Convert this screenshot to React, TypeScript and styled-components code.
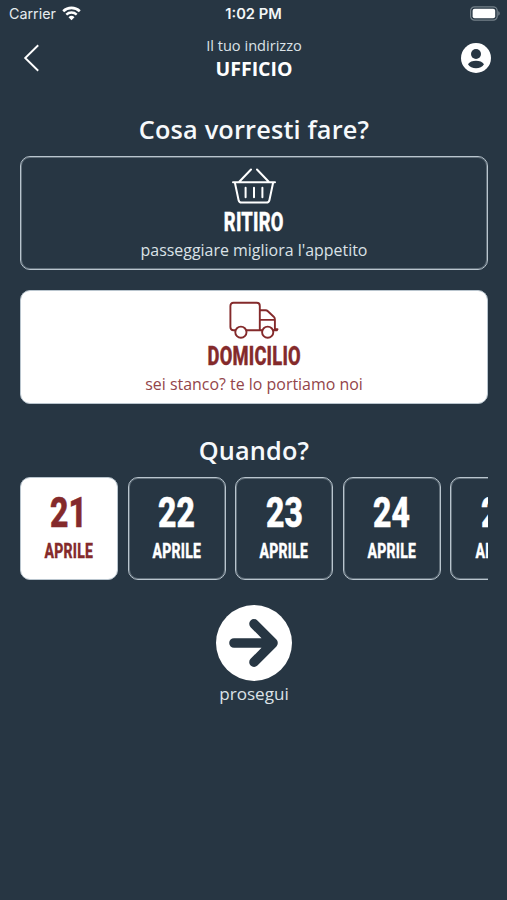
import React from 'react';
import styled, { createGlobalStyle } from 'styled-components';

const NAVY = '#273643';
const RED = '#842a2b';
const LINE = '#b9c5ce';

const GlobalStyle = createGlobalStyle`
  * { box-sizing: border-box; }
  body { margin: 0; background: ${NAVY}; }
`;

const Screen = styled.div`
  width: 507px;
  height: 900px;
  overflow: hidden;
  background: ${NAVY};
  color: #fff;
  font-family: 'Open Sans', sans-serif;
  svg { display: block; }
`;

const StatusBar = styled.div`
  display: grid;
  grid-template-columns: 1fr auto 1fr;
  align-items: center;
  height: 27px;
  padding: 0 7px 0 9px;
  font-family: Inter, sans-serif;
  font-size: 14.3px;
  color: #e6ebef;
`;

const Carrier = styled.div`
  display: flex;
  align-items: center;
  gap: 6px;
`;

const Clock = styled.div`
  margin-left: -2px;
  font-weight: 600;
  font-size: 14.7px;
  color: #f3f6f8;
`;

const Battery = styled.div`
  display: flex;
  justify-content: flex-end;
`;

const Header = styled.header`
  display: grid;
  grid-template-columns: 60px 1fr 60px;
  align-items: center;
  height: 61px;
  padding: 0 15px 0 21px;
`;

const Address = styled.div`
  display: flex;
  flex-direction: column;
  align-items: center;
  margin-left: -5px;
`;

const AddressLabel = styled.span`
  font-size: 14.6px;
  line-height: 22px;
  color: #dbe2e7;
`;

const AddressName = styled.strong`
  font-size: 19.5px;
  line-height: 26px;
  font-weight: 700;
`;

const HeaderEnd = styled.div`
  display: flex;
  justify-content: flex-end;
`;

const Content = styled.main`
  display: flex;
  flex-direction: column;
  padding: 23px 19px 0 20px;
`;

const Title = styled.h1<{ $top?: number }>`
  margin: ${p => p.$top ?? 0}px 0 9px;
  font-size: 25.3px;
  line-height: 36px;
  font-weight: 600;
  letter-spacing: 0.17px;
  color: #f6f9fb;
  text-align: center;
`;

const Option = styled.button<{ $active?: boolean }>`
  display: flex;
  flex-direction: column;
  align-items: center;
  height: 114px;
  padding: 10px 0 0;
  margin: 0 0 19.5px;
  border: 1px solid ${LINE};
  box-shadow: inset 0 0 0 1px ${p => (p.$active ? 'transparent' : 'rgba(185, 197, 206, 0.4)')};
  border-radius: 10px;
  background: ${p => (p.$active ? '#fff' : 'transparent')};
  color: ${p => (p.$active ? RED : '#fff')};
  font-family: inherit;
`;

const Condensed = styled.span<{ $size: number; $line: number; $squeeze: number; $stroke: number }>`
  font-family: Roboto, sans-serif;
  font-weight: 800;
  font-size: ${p => p.$size}px;
  line-height: ${p => p.$line}px;
  transform: scaleX(${p => p.$squeeze});
  letter-spacing: 0.3px;
  -webkit-text-stroke: ${p => p.$stroke}px currentColor;
  white-space: nowrap;
`;

const OptionNote = styled.span<{ $active?: boolean }>`
  font-size: 15.95px;
  line-height: 22px;
  color: ${p => (p.$active ? '#93454a' : '#dbe2e7')};
`;

const Dates = styled.div`
  display: flex;
  gap: 9.6px;
  overflow: hidden;
`;

const DateCard = styled.button<{ $active?: boolean }>`
  flex: none;
  display: flex;
  flex-direction: column;
  align-items: center;
  width: 98px;
  height: 103px;
  padding: 15px 0 0;
  border: 1px solid ${LINE};
  box-shadow: inset 0 0 0 1px ${p => (p.$active ? 'transparent' : 'rgba(185, 197, 206, 0.4)')};
  border-radius: 10px;
  background: ${p => (p.$active ? '#fff' : 'transparent')};
  color: ${p => (p.$active ? RED : '#fff')};
`;

const Proceed = styled.button`
  display: flex;
  flex-direction: column;
  align-items: center;
  align-self: center;
  margin-top: 25px;
  padding: 0;
  border: 0;
  background: none;
  color: #dbe2e7;
  font-family: inherit;
  font-size: 17.1px;
  line-height: 25px;
`;

const days = [21, 22, 23, 24, 25];

const WifiIcon = () => (
  <svg width="19" height="15" viewBox="0 0 19 15" fill="none" stroke="#fff">
    <path d="M1.2 5.2a12 12 0 0 1 16.6 0" strokeWidth="2.6" />
    <path d="M4.3 8.6a7.6 7.6 0 0 1 10.4 0" strokeWidth="2.4" />
    <path d="M9.5 14.2 6.5 11.2a4.3 4.3 0 0 1 6 0z" fill="#fff" stroke="none" />
  </svg>
);

const BatteryIcon = () => (
  <svg width="31" height="15" viewBox="0 0 31 15">
    <rect x="1.6" y="0.8" width="26.6" height="13.4" rx="4" fill="none" stroke="#75818a" strokeWidth="1.2" />
    <rect x="3.6" y="2.8" width="22.6" height="9.4" rx="2" fill="#fff" />
    <path d="M29.4 5.3c1.6.6 1.6 3.8 0 4.4z" fill="#85919a" />
  </svg>
);

const BackIcon = () => (
  <svg width="20" height="28" viewBox="0 0 20 28" fill="none" stroke="#fff" strokeWidth="1.9">
    <path d="M17.2 1.2 4.2 14l13 12.8" />
  </svg>
);

const UserIcon = () => (
  <svg width="32" height="32" viewBox="0 0 32 32">
    <circle cx="16" cy="16" r="15" fill="#fff" />
    <circle cx="16" cy="12" r="5" fill={NAVY} />
    <path d="M8 22.3c2.8-4.6 13.2-4.6 16 0-2.8 5.2-13.2 5.2-16 0z" fill={NAVY} />
  </svg>
);

const BasketIcon = () => (
  <svg width="46" height="38" viewBox="0 0 46 38" fill="none" stroke="#fff" strokeWidth="2" strokeLinecap="round" strokeLinejoin="round">
    <path d="M2 15.2h42M3.8 15.2l3.8 18q.5 2.3 3 2.3h24.8q2.5 0 3-2.3l3.8-18M8.5 14.5 20 2.5M37.5 14.5 26 2.5" />
    <path d="M14.6 20.7v9.6M23 20.7v9.6M31.4 20.7v9.6" />
  </svg>
);

const TruckIcon = () => (
  <svg width="50" height="38" viewBox="0 0 50 38" fill="none" stroke={RED} strokeWidth="1.9" strokeLinecap="round" strokeLinejoin="round">
    <path d="M6.2 29.2H4.5Q1.4 29.2 1.4 26V5q0-3.2 3.1-3.2h23.2q3.1 0 3.1 3.2v24.2H17.6M30.8 9.2h5.7q1.4.1 2.4 1l5.8 5.5q1.2 1.2 1.2 2.8v9.7h2.6M30.8 18.9h15M30.8 29.2h2.5M44.5 29.2h3.5" />
    <circle cx="11.9" cy="31.2" r="5.6" />
    <circle cx="38.7" cy="31.2" r="5.6" />
  </svg>
);

const ProceedIcon = () => (
  <svg width="76" height="76" viewBox="0 0 76 76" fill="none">
    <circle cx="38" cy="38" r="38" fill="#fff" />
    <path d="M18 38h39M38 18.8 57 38 38 57.2" stroke={NAVY} strokeWidth="9.6" strokeLinecap="round" strokeLinejoin="round" />
  </svg>
);

export default function App() {
  return (
    <Screen>
      <GlobalStyle />
      <StatusBar>
        <Carrier>Carrier<WifiIcon /></Carrier>
        <Clock>1:02 PM</Clock>
        <Battery><BatteryIcon /></Battery>
      </StatusBar>
      <Header>
        <BackIcon />
        <Address>
          <AddressLabel>Il tuo indirizzo</AddressLabel>
          <AddressName>UFFICIO</AddressName>
        </Address>
        <HeaderEnd><UserIcon /></HeaderEnd>
      </Header>
      <Content>
        <Title>Cosa vorresti fare?</Title>
        <Option>
          <BasketIcon />
          <Condensed $size={25.6} $line={34} $squeeze={0.717} $stroke={0.4}>RITIRO</Condensed>
          <OptionNote>passeggiare migliora l'appetito</OptionNote>
        </Option>
        <Option $active>
          <TruckIcon />
          <Condensed $size={25.6} $line={34} $squeeze={0.715} $stroke={0.4}>DOMICILIO</Condensed>
          <OptionNote $active>sei stanco? te lo portiamo noi</OptionNote>
        </Option>
        <Title $top={9}>Quando?</Title>
        <Dates>
          {days.map(day => (
            <DateCard key={day} $active={day === 21}>
              <Condensed $size={42} $line={40} $squeeze={0.76} $stroke={0.6}>{day}</Condensed>
              <Condensed $size={19.5} $line={38} $squeeze={0.72} $stroke={0.3}>APRILE</Condensed>
            </DateCard>
          ))}
        </Dates>
        <Proceed>
          <ProceedIcon />
          prosegui
        </Proceed>
      </Content>
    </Screen>
  );
}
